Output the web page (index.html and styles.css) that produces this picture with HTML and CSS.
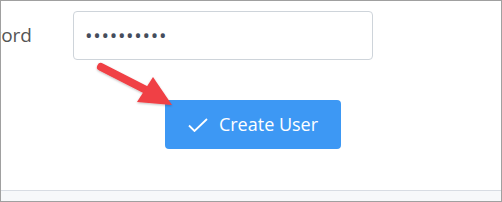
FILE: index.html
```html
<!DOCTYPE html>
<html lang="en">
<head>
    <meta charset="UTF-8">
    <title>Create User</title>
    <link rel="stylesheet" href="styles.css">
</head>
<body>
    <div class="frame">
        <div class="form-row">
            <div class="label"><span>Password</span></div>
            <div class="field">••••••••••</div>
        </div>
        <div class="actions">
            <button class="btn-create">
                <svg class="check" width="20" height="14" viewBox="0 0 20 14">
                    <path d="M1 7.5 L6.5 13 L19 1" fill="none" stroke="#fff" stroke-width="1.8"/>
                </svg>
                Create User
            </button>
        </div>
        <div class="footer"></div>

        <!-- стрелка поверх формы -->
        <svg class="arrow" width="200" height="120" viewBox="0 0 200 120">
            <defs>
                <filter id="shadow" x="-20%" y="-20%" width="140%" height="140%">
                    <feDropShadow dx="0" dy="1" stdDeviation="1" flood-color="#000" flood-opacity="0.25"/>
                </filter>
            </defs>
            <g filter="url(#shadow)">
                <line x1="101" y1="67" x2="152" y2="93" stroke="#f03f44" stroke-width="8" stroke-linecap="round"/>
                <polygon points="172,105 137,102 153,77" fill="#f03f44"/>
            </g>
        </svg>
    </div>
</body>
</html>
```

FILE: styles.css
```css
body {
    margin: 0;
    background: #fff;
    font-family: "Open Sans", "Noto Sans", sans-serif;
}
.frame {
    position: relative;
    box-sizing: border-box;
    width: 502px;
    height: 202px;
    border: 1px solid #a0a0a0;
    display: flex;
    flex-direction: column;
}
.form-row {
    display: flex;
    align-items: center;
    padding-top: 10px;
    gap: 41px;
}
.label {
    width: 31px;
    overflow: hidden;
    display: flex;
    justify-content: flex-end;
    white-space: nowrap;
    font-size: 19px;
    color: #555;
    margin-top: -2px;
}
.field {
    box-sizing: border-box;
    width: 300px;
    height: 49px;
    border: 1px solid #ced4da;
    border-radius: 4px;
    padding-left: 11px;
    display: flex;
    align-items: center;
    font-size: 20px;
    letter-spacing: 0.7px;
    color: #454d5c;
}
.actions {
    display: flex;
    padding-left: 164px;
    margin-top: 40px;
}
.btn-create {
    box-sizing: border-box;
    width: 176px;
    height: 49px;
    border: none;
    border-radius: 4px;
    background-color: #3d98f4;
    color: #fff;
    font-family: "Open Sans", "Noto Sans", sans-serif;
    font-size: 18px;
    display: flex;
    align-items: center;
    justify-content: center;
    gap: 11px;
    padding: 0 0 2px 0;
}
.check {
    margin-top: 3px;
}
.footer {
    margin-top: auto;
    height: 10px;
    border-top: 1px solid #d8dce3;
    background: #f7f8fa;
}
.arrow {
    position: absolute;
    top: -1px;
    left: -1px;
    pointer-events: none;
}
```
